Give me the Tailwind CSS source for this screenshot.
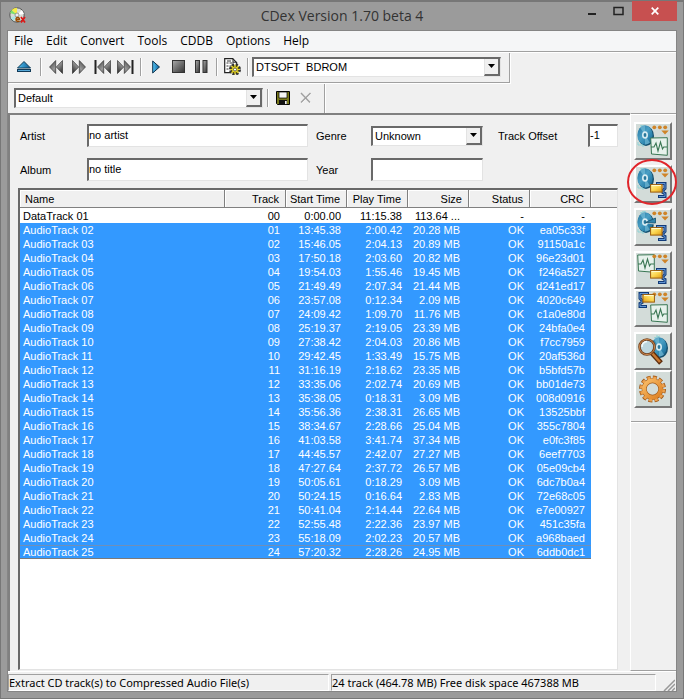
<!DOCTYPE html>
<html lang="en">
<head>
<meta charset="utf-8">
<title>CDex Version 1.70 beta 4</title>
<script src="https://cdn.jsdelivr.net/npm/@tailwindcss/browser@4"></script>
</head>
<body class="min-h-screen bg-[#9b9b9b] font-['Liberation_Sans',Arial,sans-serif] text-[11px] leading-[14px] text-black">
<svg class="absolute size-0" aria-hidden="true">
  <defs>
    <linearGradient id="metal" x1="0" y1="0" x2="1" y2="1"><stop offset="0" stop-color="#3c3c3c"/><stop offset=".5" stop-color="#999"/><stop offset="1" stop-color="#222"/></linearGradient>
    <linearGradient id="stopfill" x1="0" y1="0" x2="1" y2="1"><stop offset="0" stop-color="#aaa"/><stop offset="1" stop-color="#333"/></linearGradient>
    <linearGradient id="bluefill" x1="0" y1="0" x2="1" y2="0"><stop offset="0" stop-color="#55c4f4"/><stop offset="1" stop-color="#0a5a94"/></linearGradient>
    <linearGradient id="discfill" x1="0" y1="0" x2="1" y2="1"><stop offset="0" stop-color="#2374a0"/><stop offset=".45" stop-color="#4a9fc4"/><stop offset=".7" stop-color="#2c83ad"/><stop offset="1" stop-color="#195f88"/></linearGradient>
    <linearGradient id="gold" x1="0" y1="0" x2="1" y2="1"><stop offset="0" stop-color="#fff6a0"/><stop offset=".5" stop-color="#fbd44e"/><stop offset="1" stop-color="#dd9a13"/></linearGradient>
    <linearGradient id="gearfill" x1="0" y1="0" x2="1" y2="1"><stop offset="0" stop-color="#f9bd68"/><stop offset="1" stop-color="#dc7f22"/></linearGradient>
    <symbol id="disc" viewBox="0 0 17 21" overflow="visible">
      <path d="M6 0V-3M3 1 9 -1" stroke="#8fd3d6" stroke-width="1"/>
      <ellipse cx="9" cy="11" rx="8" ry="10" fill="#14506f"/>
      <ellipse cx="8" cy="10" rx="7.7" ry="9.7" fill="url(#discfill)"/>
      <path d="M8 10 3 2.5Q5 .8 8 .6ZM8 10l5 7.7Q11 19.5 8 19.5Z" fill="#78bfd8" opacity=".65"/>
      <ellipse cx="8" cy="10" rx="3" ry="3.8" fill="#d8edf3"/>
      <ellipse cx="8" cy="10" rx="1.4" ry="1.9" fill="#28779b"/>
      <path d="M1 17v3h5v2" fill="none" stroke="#8fd3d6"/>
    </symbol>
    <symbol id="drop" viewBox="0 0 32 32"><g fill="#cf8428"><circle cx="17.3" cy="2.3" r="1.9"/><circle cx="22.8" cy="2.3" r="1.9"/><circle cx="28.2" cy="2.3" r="1.9"/><path d="M24.3 5.5h7.5L28 9.5Z"/></g></symbol>
    <symbol id="wave" viewBox="0 0 18 19"><path d="M.7 1 17.3.7V18.3L1.5 17Z" fill="#e7f2ec" stroke="#397653"/><path d="M1 10h3l2-4 2 8 2.5-9 2 7 1.2-2H17" fill="none" stroke="#397653" stroke-width="1.1"/></symbol>
    <symbol id="clamp" viewBox="0 0 17 17"><path d="M6 1.500h9v5l-2 2v2l2 1v3H8" fill="none" stroke="#123b79" stroke-width="3"/><path d="M7 1.500h8v5l-2 2v2l2 1v3H9" fill="none" stroke="#6397d4" stroke-width="1"/><rect x=".6" y="2.6" width="11.5" height="7.5" fill="url(#gold)" stroke="#9a5b0a"/><path d="M1.5 3.5h9.5" stroke="#fffbd0"/></symbol>
    <symbol id="dblarrow" viewBox="0 0 14 14"><path d="M.5 7 6.7.5v13ZM7.3 7 13.5.5v13Z" fill="url(#metal)" stroke="#222" stroke-width=".6"/></symbol>
  </defs>
</svg>

<div class="flex min-h-screen flex-col border border-t-2 border-[#777] px-[6px] pb-[6px]">
  <header class="relative flex h-[28px] shrink-0 items-start">
    <svg class="mt-[5px] ml-[2px] size-[17px]" viewBox="0 0 17 17" aria-hidden="true">
      <circle cx="8" cy="8" r="7.2" fill="#d7dcd5" stroke="#565656"/>
      <path d="M8 8 2.5 3Q5 .8 8 .8Z" fill="#f5ec48"/><path d="M8 8 1 6l1.5-3Z" fill="#7be06b"/><path d="M8 8 15 7l-2-4Z" fill="#fff"/><path d="M8 8 1.5 11l3 3Z" fill="#a9e4e4"/>
      <circle cx="8" cy="8" r="2" fill="#eee" stroke="#777" stroke-width=".7"/>
      <path d="M7 12.500h3.500q0-2-1.800-2T7 12.500q0 2.500 3.500 1.800" fill="none" stroke="#9b4a00" stroke-width="1.300"/>
      <path d="m12 10 4 5.500m0-5.500-4 5.500" stroke="#e01515" stroke-width="1.700"/>
    </svg>
    <h1 class="absolute inset-x-0 top-[4px] text-center font-['Open_Sans',sans-serif] text-[14px] leading-[20px] text-[#333]">CDex Version 1.70 beta 4</h1>
    <div class="absolute -top-px right-0 flex h-5">
      <button type="button" aria-label="Minimize" class="flex w-[27px] items-center justify-center"><svg class="size-[10px]" viewBox="0 0 10 10"><path d="M1 8h8" stroke="#222" stroke-width="2"/></svg></button>
      <button type="button" aria-label="Maximize" class="flex w-[27px] items-center justify-center"><svg class="h-[10px] w-[11px]" viewBox="0 0 11 10"><path d="M1 1.500h9v7H1Z" fill="none" stroke="#222" stroke-width="1.500"/></svg></button>
      <button type="button" aria-label="Close" class="flex w-[45px] items-center justify-center bg-[#c75050]"><svg class="size-[8px]" viewBox="0 0 8 8"><path d="m.7.7 6.600 6.600m0-6.600L.7 7.300" stroke="#fff" stroke-width="1.700"/></svg></button>
    </div>
  </header>

  <main class="flex flex-1 flex-col border border-[#858585] bg-[#f0f0f0]">
    <nav class="flex h-5 shrink-0 items-center gap-[13px] bg-[#f5f6f7] pl-[6px] font-['Open_Sans',sans-serif] text-[12px] leading-[18px]">
      <a href="#">File</a><a href="#">Edit</a><a href="#">Convert</a><a href="#">Tools</a><a href="#">CDDB</a><a href="#">Options</a><a href="#">Help</a>
    </nav>
    <div class="h-[2px] border-t border-b border-t-[#a0a0a0] border-b-white"></div>

    <div class="flex h-[30px] w-[502px] shrink-0 items-center border-r border-b border-[#a0a0a0] pb-[2px] pl-[8px] shadow-[1px_1px_0_#fff]">
      <button type="button" aria-label="Eject" class="mr-2 size-4"><svg viewBox="0 0 16 16"><path d="M1.500 9 8 2.500 14.500 9Z" fill="url(#bluefill)" stroke="#123b55"/><path d="M1 11.500h14" stroke="#103a58" stroke-width="3"/><path d="M2 11.500h12" stroke="#55a8d8"/></svg></button>
      <span class="h-[18px] w-[2px] border-r border-l border-r-white border-l-[#a0a0a0]"></span>
      <button type="button" aria-label="Rewind" class="ml-[7px] h-[14px] w-[14px]"><svg class="size-[14px]"><use href="#dblarrow"/></svg></button>
      <button type="button" aria-label="Fast forward" class="ml-[9px] h-[14px] w-[14px]"><svg class="size-[14px]"><use href="#dblarrow" transform="matrix(-1 0 0 1 14 0)"/></svg></button>
      <button type="button" aria-label="Previous track" class="ml-2 h-[14px] w-[17px]"><svg class="h-[14px] w-[17px]" viewBox="0 0 17 14"><path d="M1.500 0v14" stroke="#222" stroke-width="2"/><use href="#dblarrow" x="3" width="14" height="14"/></svg></button>
      <button type="button" aria-label="Next track" class="ml-[6px] h-[14px] w-[17px]"><svg class="h-[14px] w-[17px]" viewBox="0 0 17 14"><g transform="matrix(-1 0 0 1 17 0)"><path d="M1.500 0v14" stroke="#222" stroke-width="2"/><use href="#dblarrow" x="3" width="14" height="14"/></g></svg></button>
      <span class="ml-[6px] h-[18px] w-[2px] border-r border-l border-r-white border-l-[#a0a0a0]"></span>
      <button type="button" aria-label="Play" class="ml-[10px] h-[14px] w-2"><svg class="h-[14px] w-2" viewBox="0 0 8 14"><path d="M.7 1v12L7.500 7Z" fill="url(#bluefill)" stroke="#0d304b"/></svg></button>
      <button type="button" aria-label="Stop" class="ml-[12px] size-[13px]"><svg viewBox="0 0 13 13"><rect x=".5" y=".5" width="12" height="12" fill="url(#stopfill)" stroke="#333"/></svg></button>
      <button type="button" aria-label="Pause" class="ml-[10px] size-[13px]"><svg viewBox="0 0 13 13"><rect x=".5" y=".5" width="4" height="12" fill="url(#stopfill)" stroke="#333"/><rect x="8" y=".5" width="4" height="12" fill="url(#stopfill)" stroke="#333"/></svg></button>
      <span class="ml-[8px] h-[18px] w-[2px] border-r border-l border-r-white border-l-[#a0a0a0]"></span>
      <button type="button" aria-label="Configuration" class="ml-[6px] size-[17px]"><svg viewBox="0 0 17 17"><path d="M.7.7h8l4 4v10h-12Z" fill="#fff" stroke="#222" stroke-width="1.200"/><path d="M9 .7v3.500h3.500" fill="none" stroke="#222"/><path d="M2.500 5h2m1 0h4m-7 3h2m1 0h3m-6 3h2m1 0h2M3 3h4" stroke="#333"/><circle cx="11" cy="11.500" r="4.500" fill="none" stroke="#333" stroke-width="3" stroke-dasharray="2.200 1.333"/><circle cx="11" cy="11.500" r="3.600" fill="#e3d32b" stroke="#4c4600"/><path d="M11 6.500v10M6 11.500h10M7.500 8l7 7m0-7-7 7" stroke="#e3d32b" stroke-width="1.200"/><circle cx="11" cy="11.500" r="1.500" fill="#fff" stroke="#333" stroke-width=".7"/></svg></button>
      <span class="ml-[6px] h-[18px] w-[2px] border-r border-l border-r-white border-l-[#a0a0a0]"></span>
      <div class="relative ml-[3px] h-5 w-[249px]">
        <select aria-label="CD drive" class="h-5 w-full appearance-none rounded-none border border-t-2 border-l-2 border-t-[#696969] border-r-[#e3e3e3] border-b-[#e3e3e3] border-l-[#696969] bg-white pl-[2px]"><option>DTSOFT&nbsp; BDROM</option></select>
        <span class="pointer-events-none absolute top-[2px] right-[1px] flex h-[17px] w-4 items-center justify-center border-r-2 border-b-2 border-l border-[#696969] border-l-[#e3e3e3] bg-[#f0f0f0]"><svg class="h-1 w-[7px]" viewBox="0 0 7 4"><path d="M0 0h7L3.500 4Z"/></svg></span>
      </div>
    </div>

    <div class="mt-px flex h-[29px] w-[317px] shrink-0 items-center border-r border-[#a0a0a0] pb-[2px] pl-[6px] shadow-[1px_0_0_#fff]">
      <div class="relative h-5 w-[249px]">
        <select aria-label="Profile" class="h-5 w-full appearance-none rounded-none border border-t-2 border-l-2 border-t-[#696969] border-r-[#e3e3e3] border-b-[#e3e3e3] border-l-[#696969] bg-white pl-[2px]"><option>Default</option></select>
        <span class="pointer-events-none absolute top-[2px] right-[1px] flex h-[17px] w-4 items-center justify-center border-r-2 border-b-2 border-l border-[#696969] border-l-[#e3e3e3] bg-[#f0f0f0]"><svg class="h-1 w-[7px]" viewBox="0 0 7 4"><path d="M0 0h7L3.500 4Z"/></svg></span>
      </div>
      <span class="ml-[4px] h-[18px] w-[2px] border-r border-l border-r-white border-l-[#a0a0a0]"></span>
      <button type="button" aria-label="Save profile" class="ml-[7px] size-[14px]"><svg viewBox="0 0 14 14"><path d="M.5.5h13v13h-12l-1-1Z" fill="#77771b" stroke="#000"/><path d="M3 1h8v6H3Z" fill="#f4f4f4" stroke="#000" stroke-width=".7"/><path d="M3 9h8v5H3Z" fill="#111"/><path d="M9 10h1.700v3H9Z" fill="#eee"/></svg></button>
      <button type="button" aria-label="Delete profile" disabled class="ml-[10px] size-[12px]"><svg viewBox="0 0 12 12"><path d="m1.500 1.500 9 9.500m0-9.500-9 9.500" stroke="#fff" stroke-width="1.500"/><path d="m1 1 9 9.500M10.500 1 1 10.500" stroke="#a0a0a0" stroke-width="1.500"/></svg></button>
    </div>

    <div class="flex flex-1">
      <section class="flex min-w-0 flex-1 flex-col border-t-2 border-l-2 border-t-[#808080] border-l-[#808080] pr-[12px] pb-px pl-[8px]">
        <div class="mt-[9px] grid grid-cols-[67px_minmax(0,1fr)_63px_112px_105px_30px] items-center gap-y-[11px] pl-[2px]">
          <label for="artist">Artist</label>
          <input id="artist" value="no artist" class="h-[23px] w-full border border-t-2 border-l-2 border-t-[#696969] border-r-[#e3e3e3] border-b-[#e3e3e3] border-l-[#696969] bg-white pb-[2px]">
          <label for="genre" class="pl-[8px]">Genre</label>
          <div class="relative h-[20px]">
            <select id="genre" class="h-5 w-full appearance-none rounded-none border border-t-2 border-l-2 border-t-[#696969] border-r-[#e3e3e3] border-b-[#e3e3e3] border-l-[#696969] bg-white pl-[2px]"><option>Unknown</option></select>
            <span class="pointer-events-none absolute top-[2px] right-[1px] flex h-[17px] w-4 items-center justify-center border-r-2 border-b-2 border-l border-[#696969] border-l-[#e3e3e3] bg-[#f0f0f0]"><svg class="h-1 w-[7px]" viewBox="0 0 7 4"><path d="M0 0h7L3.500 4Z"/></svg></span>
          </div>
          <label for="offset" class="pl-[15px]">Track Offset</label>
          <input id="offset" value="-1" class="h-[23px] w-full border border-t-2 border-l-2 border-t-[#696969] border-r-[#e3e3e3] border-b-[#e3e3e3] border-l-[#696969] bg-white pb-[2px]">
          <label for="album">Album</label>
          <input id="album" value="no title" class="h-[23px] w-full border border-t-2 border-l-2 border-t-[#696969] border-r-[#e3e3e3] border-b-[#e3e3e3] border-l-[#696969] bg-white pb-[2px]">
          <label for="year" class="pl-[8px]">Year</label>
          <input id="year" class="h-[23px] w-full border border-t-2 border-l-2 border-t-[#696969] border-r-[#e3e3e3] border-b-[#e3e3e3] border-l-[#696969] bg-white pb-[2px]">
        </div>

        <div class="mt-[7px] flex-1 border border-t-2 border-l-2 border-t-[#696969] border-r-[#e3e3e3] border-b-[#e3e3e3] border-l-[#696969] bg-white">
          <table class="w-full table-fixed border-separate border-spacing-0">
            <colgroup><col><col class="w-[61px]"><col class="w-[61px]"><col class="w-[61px]"><col class="w-[61px]"><col class="w-[61px]"><col class="w-[61px]"><col class="w-[26px]"></colgroup>
            <thead>
              <tr id="heads"></tr>
            </thead>
            <tbody id="tracks"></tbody>
          </table>
        </div>
      </section>

      <aside aria-label="Actions" class="flex w-[46px] shrink-0 flex-col border-t border-b border-l border-t-[#a0a0a0] border-b-[#a0a0a0] border-l-white shadow-[inset_0_1px_0_#fff]">
        <div class="flex flex-col items-center gap-[5px] border-b border-[#a0a0a0] pt-[8px] pr-[1px] pb-[13px] shadow-[0_1px_0_#fff]">
          <button type="button" aria-label="Extract CD tracks to WAV files" class="size-[38px] border-2 border-t-white border-r-[#777] border-b-[#777] border-l-white bg-[#d3dcd9] p-px"><svg class="size-[32px]" viewBox="0 0 32 32"><use href="#disc" width="17" height="21"/><use href="#drop"/><use href="#wave" x="13" y="12" width="18" height="19"/></svg></button>
          <div class="relative size-[38px]">
            <button type="button" aria-label="Extract CD tracks to compressed audio files" class="size-[38px] border-2 border-t-white border-r-[#777] border-b-[#777] border-l-white bg-[#d3dcd9] p-px"><svg class="size-[32px]" viewBox="0 0 32 32"><use href="#disc" width="17" height="21"/><use href="#drop"/><use href="#clamp" x="13" y="14" width="17" height="17"/></svg></button>
            <svg class="pointer-events-none absolute -top-[6px] -left-[7px] h-[46px] w-[50px]" viewBox="0 0 50 46" aria-hidden="true"><ellipse cx="25" cy="23" rx="24" ry="22" fill="none" stroke="#e0252b" stroke-width="2"/></svg>
          </div>
          <button type="button" aria-label="Extract partial CD track" class="size-[38px] border-2 border-t-white border-r-[#777] border-b-[#777] border-l-white bg-[#d3dcd9] p-px"><svg class="size-[32px]" viewBox="0 0 32 32"><use href="#disc" y="1" width="17" height="21"/><path d="m8 12 12-5v7Z" fill="#d3dcd9"/><path d="m8.500 11.500 10-4.500v5Z" fill="#3085ad" stroke="#134e6c" stroke-width=".8"/><use href="#drop"/><use href="#clamp" x="13" y="14" width="17" height="17"/></svg></button>
          <div class="flex flex-col">
            <button type="button" aria-label="Convert WAV files to compressed audio" class="size-[38px] border-2 border-t-white border-r-[#777] border-b-[#777] border-l-white bg-[#d3dcd9] p-px"><svg class="size-[32px]" viewBox="0 0 32 32"><use href="#wave" width="18" height="19"/><use href="#drop"/><use href="#clamp" x="13" y="14" width="17" height="17"/></svg></button>
            <button type="button" aria-label="Convert compressed audio to WAV files" class="size-[38px] border-2 border-t-white border-r-[#777] border-b-[#777] border-l-white bg-[#d3dcd9] p-px"><svg class="size-[32px]" viewBox="0 0 32 32"><use href="#drop"/><g transform="matrix(-1 0 0 1 18 0)"><use href="#clamp" width="17" height="17"/></g><use href="#wave" x="13" y="12" width="18" height="19"/></svg></button>
          </div>
          <div class="flex flex-col">
            <button type="button" aria-label="Read CD information" class="size-[38px] border-2 border-t-white border-r-[#777] border-b-[#777] border-l-white bg-[#d3dcd9] p-px"><svg class="size-[32px]" viewBox="0 0 32 32"><use href="#disc" x="14" y="2" width="17" height="21"/><path d="m15 18 9 10" stroke="#5c2c0c" stroke-width="5"/><path d="m15 18 8 9" stroke="#c97830" stroke-width="2.600"/><circle cx="10" cy="12" r="7.500" fill="#b9d5de" fill-opacity=".9" stroke="#70401f" stroke-width="2.600"/><circle cx="10" cy="12" r="7.600" fill="none" stroke="#cb864b"/><path d="M5 12q0-5 5-5.500" fill="none" stroke="#f2fafb" stroke-width="1.500"/></svg></button>
            <button type="button" aria-label="Configure CDex" class="size-[38px] border-2 border-t-white border-r-[#777] border-b-[#777] border-l-white bg-[#d3dcd9] p-px"><svg class="size-[32px]" viewBox="0 0 32 32"><g transform="translate(15.500 16)"><circle r="11.300" fill="none" stroke="#a35a18" stroke-width="4.400" stroke-dasharray="3.800 2.117"/><circle r="8.300" fill="none" stroke="#a35a18" stroke-width="5"/><circle r="11" fill="none" stroke="#eda14d" stroke-width="3.200" stroke-dasharray="2.900 2.860" stroke-dashoffset="-.4"/><circle r="8.400" fill="none" stroke="url(#gearfill)" stroke-width="4"/></g></svg></button>
          </div>
        </div>
      </aside>
    </div>

    <footer class="flex h-[20px] shrink-0 items-end border-t border-white font-['Noto_Sans',sans-serif] text-[11px] leading-[16px]">
      <p class="h-[17px] w-[321px] border border-t-[#a0a0a0] border-r-white border-b-white border-l-[#a0a0a0]">Extract CD track(s) to Compressed Audio File(s)</p>
      <p class="ml-[2px] h-[17px] flex-1 border border-t-[#a0a0a0] border-r-white border-b-white border-l-[#a0a0a0]">24 track (464.78 MB) Free disk space 467388 MB</p>
      <svg class="mr-px ml-[7px] size-[12px]" viewBox="0 0 12 12" aria-hidden="true"><path d="m1 12 11-11M5 12l7-7M9 12l3-3" stroke="#999" stroke-width="1.500"/></svg>
    </footer>
  </main>
</div>

<script>
const heads = ["Name", "Track", "Start Time", "Play Time", "Size", "Status", "CRC", ""];
document.getElementById("heads").innerHTML = heads.map((h, i) =>
  `<th class="h-[18px] ${i < 7 ? "border-r" : ""} border-b border-[#808080] bg-[#f0f0f0] p-0 font-normal whitespace-nowrap shadow-[inset_1px_1px_0_#fff] ${i === 0 ? "pl-[5px] text-left" : "pr-[6px] text-right"}">${h}</th>`).join("");

const tracks = `0:00.00|11:15.38|113.64 ...|-|-
13:45.38|2:00.42|20.28 MB|OK|ea05c33f
15:46.05|2:04.13|20.89 MB|OK|91150a1c
17:50.18|2:03.60|20.82 MB|OK|96e23d01
19:54.03|1:55.46|19.45 MB|OK|f246a527
21:49.49|2:07.34|21.44 MB|OK|d241ed17
23:57.08|0:12.34|2.09 MB|OK|4020c649
24:09.42|1:09.70|11.76 MB|OK|c1a0e80d
25:19.37|2:19.05|23.39 MB|OK|24bfa0e4
27:38.42|2:04.03|20.86 MB|OK|f7cc7959
29:42.45|1:33.49|15.75 MB|OK|20af536d
31:16.19|2:18.62|23.35 MB|OK|b5bfd57b
33:35.06|2:02.74|20.69 MB|OK|bb01de73
35:38.05|0:18.31|3.09 MB|OK|008d0916
35:56.36|2:38.31|26.65 MB|OK|13525bbf
38:34.67|2:28.66|25.04 MB|OK|355c7804
41:03.58|3:41.74|37.34 MB|OK|e0fc3f85
44:45.57|2:42.07|27.27 MB|OK|6eef7703
47:27.64|2:37.72|26.57 MB|OK|05e09cb4
50:05.61|0:18.29|3.09 MB|OK|6dc7b0a4
50:24.15|0:16.64|2.83 MB|OK|72e68c05
50:41.04|2:14.44|22.64 MB|OK|e7e00927
52:55.48|2:22.36|23.97 MB|OK|451c35fa
55:18.09|2:02.23|20.57 MB|OK|a968baed
57:20.32|2:28.26|24.95 MB|OK|6ddb0dc1`.split("\n");
const pad = n => String(n).padStart(2, "0");
document.getElementById("tracks").innerHTML = tracks.map((line, i) => {
  const cells = [pad(i), ...line.split("|")];
  const row = i === 0 ? "h-[15px] text-black" : "h-[14px] bg-[#3399ff] text-white";
  const focus = i === tracks.length - 1 ? "border-y border-t-[#6f8fb8] border-b-[#7a7a7a] leading-[12px]" : "leading-[14px]";
  return `<tr><td class="p-0 pl-[3px] ${row} ${focus}">${i ? "AudioTrack" : "DataTrack"} ${pad(i + 1)}</td>` +
    cells.map((c, j) => `<td class="p-0 text-right whitespace-nowrap ${j === 3 ? "pr-[9px]" : "pr-[6px]"} ${row} ${focus}">${c}</td>`).join("") +
    `<td></td></tr>`;
}).join("");
</script>
</body>
</html>
